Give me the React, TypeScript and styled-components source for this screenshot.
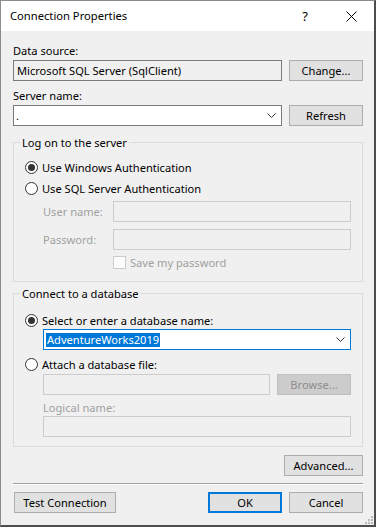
import React from "react";
import styled, { createGlobalStyle } from "styled-components";

const GlobalStyle = createGlobalStyle`
  html, body { margin: 0; padding: 0; background: #f0f0f0; }
  body {
    font-family: "Segoe UI", "Noto Sans", "Liberation Sans", sans-serif;
    font-size: 11.1px;
    color: #000;
  }
  * { box-sizing: border-box; }
`;

const Window = styled.div`
  width: 376px;
  height: 527px;
  display: flex;
  flex-direction: column;
  background: #f0f0f0;
  border-left: 1px solid #8c8c8c;
  border-top: 1px solid #8c8c8c;
  border-right: 2px solid #4d4d4d;
  border-bottom: 2px solid #4d4d4d;
  overflow: hidden;
  position: relative;
`;

const TitleBar = styled.div`
  height: 30px;
  background: #fff;
  display: flex;
  align-items: center;
  padding-left: 9px;
  flex-shrink: 0;
`;

const Title = styled.div`
  flex: 1;
  font-size: 11.2px;
  line-height: 16px;
`;

const CaptionButton = styled.div`
  width: 46px;
  height: 30px;
  display: flex;
  align-items: center;
  justify-content: center;
  font-size: 13px;
  line-height: 16px;
`;

const Body = styled.div`
  flex: 1;
  display: flex;
  flex-direction: column;
  padding: 0 11px 0 12px;
`;

const Label = styled.div<{ $top?: number; $disabled?: boolean; $indent?: number }>`
  line-height: 15px;
  height: 15px;
  margin-top: ${(p) => p.$top ?? 0}px;
  margin-left: ${(p) => p.$indent ?? 0}px;
  color: ${(p) => (p.$disabled ? "#a0a0a0" : "#000")};
  white-space: nowrap;
`;

const Row = styled.div<{ $top?: number; $indent?: number; $justify?: string; $gap?: number }>`
  display: flex;
  align-items: center;
  gap: ${(p) => p.$gap ?? 7}px;
  margin-top: ${(p) => p.$top ?? 0}px;
  margin-left: ${(p) => p.$indent ?? 0}px;
  justify-content: ${(p) => p.$justify ?? "flex-start"};
`;

const TextBox = styled.div<{ $variant?: "readonly" | "normal" | "disabled" }>`
  height: 21px;
  flex: 1;
  display: flex;
  align-items: center;
  padding-left: 3px;
  border: 1px solid ${(p) => (p.$variant === "disabled" ? "#cccccc" : "#7a7a7a")};
  background: ${(p) => (p.$variant === "normal" ? "#fff" : "#f0f0f0")};
  white-space: nowrap;
  overflow: hidden;
`;

const Combo = styled.div<{ $focused?: boolean }>`
  height: 21px;
  flex: 1;
  display: flex;
  align-items: center;
  padding-left: 2px;
  padding-right: 5px;
  border: 1px solid ${(p) => (p.$focused ? "#0078d7" : "#7a7a7a")};
  background: #fff;
`;

const ComboText = styled.div`
  flex: 1;
  white-space: nowrap;
  line-height: 15px;
`;

const Selected = styled.span`
  background: #0078d7;
  color: #fff;
  padding: 0 1px;
  display: inline-block;
  line-height: 14px;
`;

const Button = styled.div<{ $width: number; $default?: boolean; $disabled?: boolean; $inset?: number }>`
  width: ${(p) => p.$width}px;
  height: 21px;
  flex-shrink: 0;
  margin-left: ${(p) => p.$inset ?? 0}px;
  display: flex;
  align-items: center;
  justify-content: center;
  background: ${(p) => (p.$disabled ? "#cccccc" : "#e1e1e1")};
  border: ${(p) =>
    p.$default ? "2px solid #0078d7" : p.$disabled ? "1px solid #bfbfbf" : "1px solid #adadad"};
  color: ${(p) => (p.$disabled ? "#8d8d8d" : "#000")};
  white-space: nowrap;
`;

const Group = styled.fieldset<{ $top: number; $bottom: number }>`
  margin: ${(p) => p.$top}px 0 0 0;
  padding: 0 11px ${(p) => p.$bottom}px 11px;
  border: 1px solid #dcdcdc;
  min-width: 0;
  display: flex;
  flex-direction: column;
`;

const Legend = styled.legend`
  padding: 0 2px;
  margin-left: -5px;
  line-height: 15px;
  height: 15px;
`;

const RadioRow = styled.div<{ $top: number }>`
  display: flex;
  align-items: center;
  gap: 4px;
  height: 15px;
  margin-top: ${(p) => p.$top}px;
`;

const RadioCircle = styled.div<{ $checked?: boolean }>`
  width: 13px;
  height: 13px;
  border-radius: 50%;
  border: 1px solid #333;
  background: #fff;
  display: flex;
  align-items: center;
  justify-content: center;
  flex-shrink: 0;
  &::after {
    content: "";
    width: 7px;
    height: 7px;
    border-radius: 50%;
    background: ${(p) => (p.$checked ? "#333" : "transparent")};
  }
`;

const FieldLabel = styled.div`
  width: 70px;
  color: #a0a0a0;
  white-space: nowrap;
`;

const CheckRow = styled.div<{ $top: number }>`
  display: flex;
  align-items: center;
  gap: 4px;
  height: 13px;
  margin-top: ${(p) => p.$top}px;
  margin-left: 88px;
  color: #a0a0a0;
`;

const CheckBox = styled.div`
  width: 13px;
  height: 13px;
  border: 1px solid #cccccc;
  background: #fcfcfc;
  flex-shrink: 0;
`;

const Separator = styled.div`
  margin-top: 7px;
  height: 2px;
  border-top: 1px solid #a0a0a0;
  border-bottom: 1px solid #ffffff;
`;

const Spacer = styled.div`
  flex: 1;
`;

const Grip = styled.svg`
  position: absolute;
  right: 1px;
  bottom: 1px;
`;

const Chevron = () => (
  <svg width="9" height="5" viewBox="0 0 9 5">
    <path d="M0.5 0.5 L4.5 4.5 L8.5 0.5" fill="none" stroke="#333" strokeWidth="1" />
  </svg>
);

const Radio = ({ top, checked, children }: { top: number; checked?: boolean; children: React.ReactNode }) => (
  <RadioRow $top={top}>
    <RadioCircle $checked={checked} />
    <span>{children}</span>
  </RadioRow>
);

export default function App() {
  return (
    <>
      <GlobalStyle />
      <Window>
        <TitleBar>
          <Title>Connection Properties</Title>
          <CaptionButton>?</CaptionButton>
          <CaptionButton>
            <svg width="11" height="11" viewBox="0 0 11 11">
              <path d="M0.5 0.5 L10.5 10.5 M10.5 0.5 L0.5 10.5" stroke="#000" strokeWidth="1" />
            </svg>
          </CaptionButton>
        </TitleBar>
        <Body>
          <Label $top={12}>Data source:</Label>
          <Row $top={2}>
            <TextBox $variant="readonly">Microsoft SQL Server (SqlClient)</TextBox>
            <Button $width={74}>Change...</Button>
          </Row>
          <Label $top={7}>Server name:</Label>
          <Row $top={2}>
            <Combo>
              <ComboText>.</ComboText>
              <Chevron />
            </Combo>
            <Button $width={74}>Refresh</Button>
          </Row>

          <Group $top={9} $bottom={12}>
            <Legend>Log on to the server</Legend>
            <Radio top={10} checked>
              Use Windows Authentication
            </Radio>
            <Radio top={6}>Use SQL Server Authentication</Radio>
            <Row $top={5} $indent={18} $gap={0}>
              <FieldLabel>User name:</FieldLabel>
              <TextBox $variant="disabled" />
            </Row>
            <Row $top={7} $indent={18} $gap={0}>
              <FieldLabel>Password:</FieldLabel>
              <TextBox $variant="disabled" />
            </Row>
            <CheckRow $top={6}>
              <CheckBox />
              <span>Save my password</span>
            </CheckRow>
          </Group>

          <Group $top={4} $bottom={9}>
            <Legend>Connect to a database</Legend>
            <Radio top={12} checked>
              Select or enter a database name:
            </Radio>
            <Row $top={1} $indent={18}>
              <Combo $focused>
                <ComboText>
                  <Selected>AdventureWorks2019</Selected>
                </ComboText>
                <Chevron />
              </Combo>
            </Row>
            <Radio top={7}>Attach a database file:</Radio>
            <Row $top={2} $indent={18}>
              <TextBox $variant="disabled" />
              <Button $width={74} $disabled>
                Browse...
              </Button>
            </Row>
            <Label $top={5} $indent={18} $disabled>
              Logical name:
            </Label>
            <Row $top={1} $indent={18}>
              <TextBox $variant="disabled" />
            </Row>
          </Group>

          <Row $top={8} $justify="flex-end">
            <Button $width={79}>Advanced...</Button>
          </Row>
          <Separator />
          <Row $top={7}>
            <Button $width={102} $inset={1}>
              Test Connection
            </Button>
            <Spacer />
            <Button $width={74} $default>
              OK
            </Button>
            <Button $width={74}>Cancel</Button>
          </Row>
        </Body>
        <Grip width="8" height="8" viewBox="0 0 8 8">
          {[
            [6, 0],
            [6, 3],
            [3, 3],
            [6, 6],
            [3, 6],
            [0, 6],
          ].map(([x, y], i) => (
            <rect key={i} x={x} y={y} width="2" height="2" fill="#b8b8b8" />
          ))}
        </Grip>
      </Window>
    </>
  );
}
